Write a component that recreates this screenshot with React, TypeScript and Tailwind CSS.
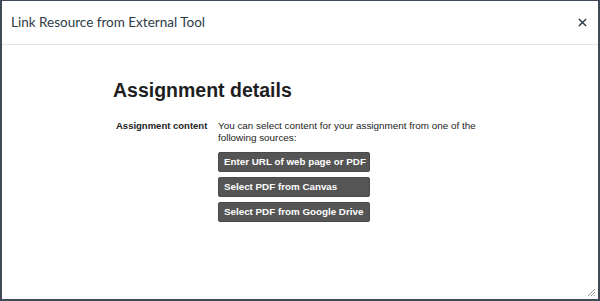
import React from "react";

export default function App() {
  const btn =
    "h-[20px] w-[152px] rounded-[2px] bg-[#555555] text-white text-[9.8px] font-bold text-left pl-[5px] leading-[18px] border border-[#4a4a4a] whitespace-nowrap overflow-hidden";
  return (
    <div className="w-[600px] h-[301px] bg-[#3e4a56] pt-[1px] pl-[2px] pr-[2px] pb-[2px]">
      <div className="w-full h-full bg-white flex flex-col relative">
        <div className="h-[44px] border-b border-[#e5e5e5] flex items-center justify-between pl-[9px] pr-[11px] shrink-0">
          <span
            className="text-[13.5px] text-[#2d3b45]"
            style={{ fontFamily: "Lato, 'Open Sans', sans-serif" }}
          >
            Link Resource from External Tool
          </span>
          <svg width="9" height="9" viewBox="0 0 10 10">
            <path d="M1 1 L9 9 M9 1 L1 9" stroke="#2d3b45" strokeWidth="1.6" />
          </svg>
        </div>
        <div
          className="flex-1 pl-[111px] pt-[32px]"
          style={{ fontFamily: "'Liberation Sans', Arial, sans-serif" }}
        >
          <h1 className="text-[19.5px] font-bold text-[#1e1e1e] leading-[26px]">
            Assignment details
          </h1>
          <div className="flex mt-[17px]">
            <div className="w-[105px] pl-[3px] text-[9.5px] font-bold text-[#222] leading-[12px] whitespace-nowrap">
              Assignment content
            </div>
            <div className="flex flex-col">
              <p className="text-[9.9px] text-[#222] leading-[12px] w-[280px]">
                You can select content for your assignment from one of the
                following sources:
              </p>
              <div className="flex flex-col gap-[5px] mt-[8px]">
                <button className={btn}>Enter URL of web page or PDF</button>
                <button className={btn}>Select PDF from Canvas</button>
                <button className={btn}>Select PDF from Google Drive</button>
              </div>
            </div>
          </div>
        </div>
        <svg
          className="absolute right-[2px] bottom-[2px]"
          width="9"
          height="9"
          viewBox="0 0 9 9"
        >
          <path d="M8 1 L1 8 M8 4 L4 8 M8 7 L7 8" stroke="#999" strokeWidth="1" />
        </svg>
      </div>
    </div>
  );
}
